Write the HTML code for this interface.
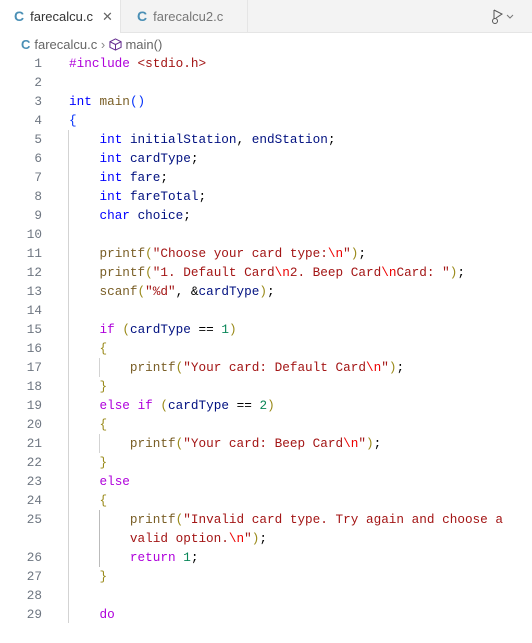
<!DOCTYPE html>
<html><head><meta charset="utf-8"><style>
*{margin:0;padding:0;box-sizing:border-box}
body{width:532px;height:623px;overflow:hidden;background:#fff;font-family:"Liberation Sans",sans-serif;position:relative}
.tabs{position:absolute;left:0;top:0;width:532px;height:33px;background:#f3f3f3;border-bottom:1px solid #e5e5e5}
.tab{position:absolute;top:0;height:33px;font-size:13px;line-height:33px;color:#333}
.t1{left:0;width:120px;background:#fff;height:34px}
.t2{left:120px;width:128px;border-left:1px solid #e5e5e5;border-right:1px solid #e5e5e5;color:#777}
.c{color:#4a8fb5;font-weight:bold;font-size:14px;margin-right:6px}
.bc{position:absolute;top:35px;left:21px;font-size:13px;color:#666;line-height:20px}
.code{position:absolute;left:0;top:54px;font-family:"Liberation Mono",monospace;font-size:12.7px;line-height:19px;white-space:pre;color:#000}
.ln{position:absolute;left:0;width:42px;text-align:right;color:#6e7681}
.tx{position:absolute;left:69px}
.k{color:#0000ff}.f{color:#795e26}.s{color:#a31515}.n{color:#098658}.p{color:#af00db}.v{color:#001080}.b1{color:#0431fa}.b2{color:#9a8a1a}.e{color:#ee0000}
.g{position:absolute;width:1px;background:#d3d3d3}
</style></head><body>
<div class="tabs">
<div class="tab t1"><span style="margin-left:14px" class="c">C</span>farecalcu.c<span style="margin-left:9px;font-size:13px;color:#666">✕</span></div>
<div class="tab t2"><span style="margin-left:16px" class="c">C</span>farecalcu2.c</div>
<svg style="position:absolute;left:492px;top:9px" width="40" height="16" viewBox="0 0 40 16"><path d="M2 1 L2 10 M2 1 L10 5 L4 9" fill="none" stroke="#555" stroke-width="1"/><circle cx="3" cy="12" r="2.5" fill="none" stroke="#555"/><path d="M15 6 l3 3 l3 -3" fill="none" stroke="#777"/></svg>
</div>
<div class="bc"><span class="c" style="font-size:13px;margin-right:4px">C</span>farecalcu.c <span style="color:#888">›</span> <svg width="13" height="13" viewBox="0 0 14 14" style="vertical-align:-2px"><path d="M7 1 L13 4 L13 10 L7 13 L1 10 L1 4 Z M1 4 L7 7 L13 4 M7 7 L7 13" fill="none" stroke="#652d90" stroke-width="1.1"/></svg> main()</div>
<div class="g" style="left:68px;top:130px;height:493px"></div>
<div class="g" style="left:99px;top:358px;height:19px"></div>
<div class="g" style="left:99px;top:434px;height:19px"></div>
<div class="g" style="left:99px;top:510px;height:57px;background:#bbb"></div>
<div class="code">
<div class="ln" style="top:0">1</div><div class="tx" style="top:0"><span class="p">#include</span> <span class="s">&lt;stdio.h&gt;</span></div>
<div class="ln" style="top:19px">2</div>
<div class="ln" style="top:38px">3</div><div class="tx" style="top:38px"><span class="k">int</span> <span class="f">main</span><span class="b1">()</span></div>
<div class="ln" style="top:57px">4</div><div class="tx" style="top:57px"><span class="b1">{</span></div>
<div class="ln" style="top:76px">5</div><div class="tx" style="top:76px">    <span class="k">int</span> <span class="v">initialStation</span>, <span class="v">endStation</span>;</div>
<div class="ln" style="top:95px">6</div><div class="tx" style="top:95px">    <span class="k">int</span> <span class="v">cardType</span>;</div>
<div class="ln" style="top:114px">7</div><div class="tx" style="top:114px">    <span class="k">int</span> <span class="v">fare</span>;</div>
<div class="ln" style="top:133px">8</div><div class="tx" style="top:133px">    <span class="k">int</span> <span class="v">fareTotal</span>;</div>
<div class="ln" style="top:152px">9</div><div class="tx" style="top:152px">    <span class="k">char</span> <span class="v">choice</span>;</div>
<div class="ln" style="top:171px">10</div>
<div class="ln" style="top:190px">11</div><div class="tx" style="top:190px">    <span class="f">printf</span><span class="b2">(</span><span class="s">"Choose your card type:</span><span class="e">\n</span><span class="s">"</span><span class="b2">)</span>;</div>
<div class="ln" style="top:209px">12</div><div class="tx" style="top:209px">    <span class="f">printf</span><span class="b2">(</span><span class="s">"1. Default Card</span><span class="e">\n</span><span class="s">2. Beep Card</span><span class="e">\n</span><span class="s">Card: "</span><span class="b2">)</span>;</div>
<div class="ln" style="top:228px">13</div><div class="tx" style="top:228px">    <span class="f">scanf</span><span class="b2">(</span><span class="s">"%d"</span>, &amp;<span class="v">cardType</span><span class="b2">)</span>;</div>
<div class="ln" style="top:247px">14</div>
<div class="ln" style="top:266px">15</div><div class="tx" style="top:266px">    <span class="p">if</span> <span class="b2">(</span><span class="v">cardType</span> == <span class="n">1</span><span class="b2">)</span></div>
<div class="ln" style="top:285px">16</div><div class="tx" style="top:285px">    <span class="b2">{</span></div>
<div class="ln" style="top:304px">17</div><div class="tx" style="top:304px">        <span class="f">printf</span><span class="b2">(</span><span class="s">"Your card: Default Card</span><span class="e">\n</span><span class="s">"</span><span class="b2">)</span>;</div>
<div class="ln" style="top:323px">18</div><div class="tx" style="top:323px">    <span class="b2">}</span></div>
<div class="ln" style="top:342px">19</div><div class="tx" style="top:342px">    <span class="p">else</span> <span class="p">if</span> <span class="b2">(</span><span class="v">cardType</span> == <span class="n">2</span><span class="b2">)</span></div>
<div class="ln" style="top:361px">20</div><div class="tx" style="top:361px">    <span class="b2">{</span></div>
<div class="ln" style="top:380px">21</div><div class="tx" style="top:380px">        <span class="f">printf</span><span class="b2">(</span><span class="s">"Your card: Beep Card</span><span class="e">\n</span><span class="s">"</span><span class="b2">)</span>;</div>
<div class="ln" style="top:399px">22</div><div class="tx" style="top:399px">    <span class="b2">}</span></div>
<div class="ln" style="top:418px">23</div><div class="tx" style="top:418px">    <span class="p">else</span></div>
<div class="ln" style="top:437px">24</div><div class="tx" style="top:437px">    <span class="b2">{</span></div>
<div class="ln" style="top:456px">25</div><div class="tx" style="top:456px">        <span class="f">printf</span><span class="b2">(</span><span class="s">"Invalid card type. Try again and choose a</span></div>
<div class="tx" style="top:475px">        <span class="s">valid option.</span><span class="e">\n</span><span class="s">"</span><span class="b2">)</span>;</div>
<div class="ln" style="top:494px">26</div><div class="tx" style="top:494px">        <span class="p">return</span> <span class="n">1</span>;</div>
<div class="ln" style="top:513px">27</div><div class="tx" style="top:513px">    <span class="b2">}</span></div>
<div class="ln" style="top:532px">28</div>
<div class="ln" style="top:551px">29</div><div class="tx" style="top:551px">    <span class="p">do</span></div>
</div>
</body></html>
